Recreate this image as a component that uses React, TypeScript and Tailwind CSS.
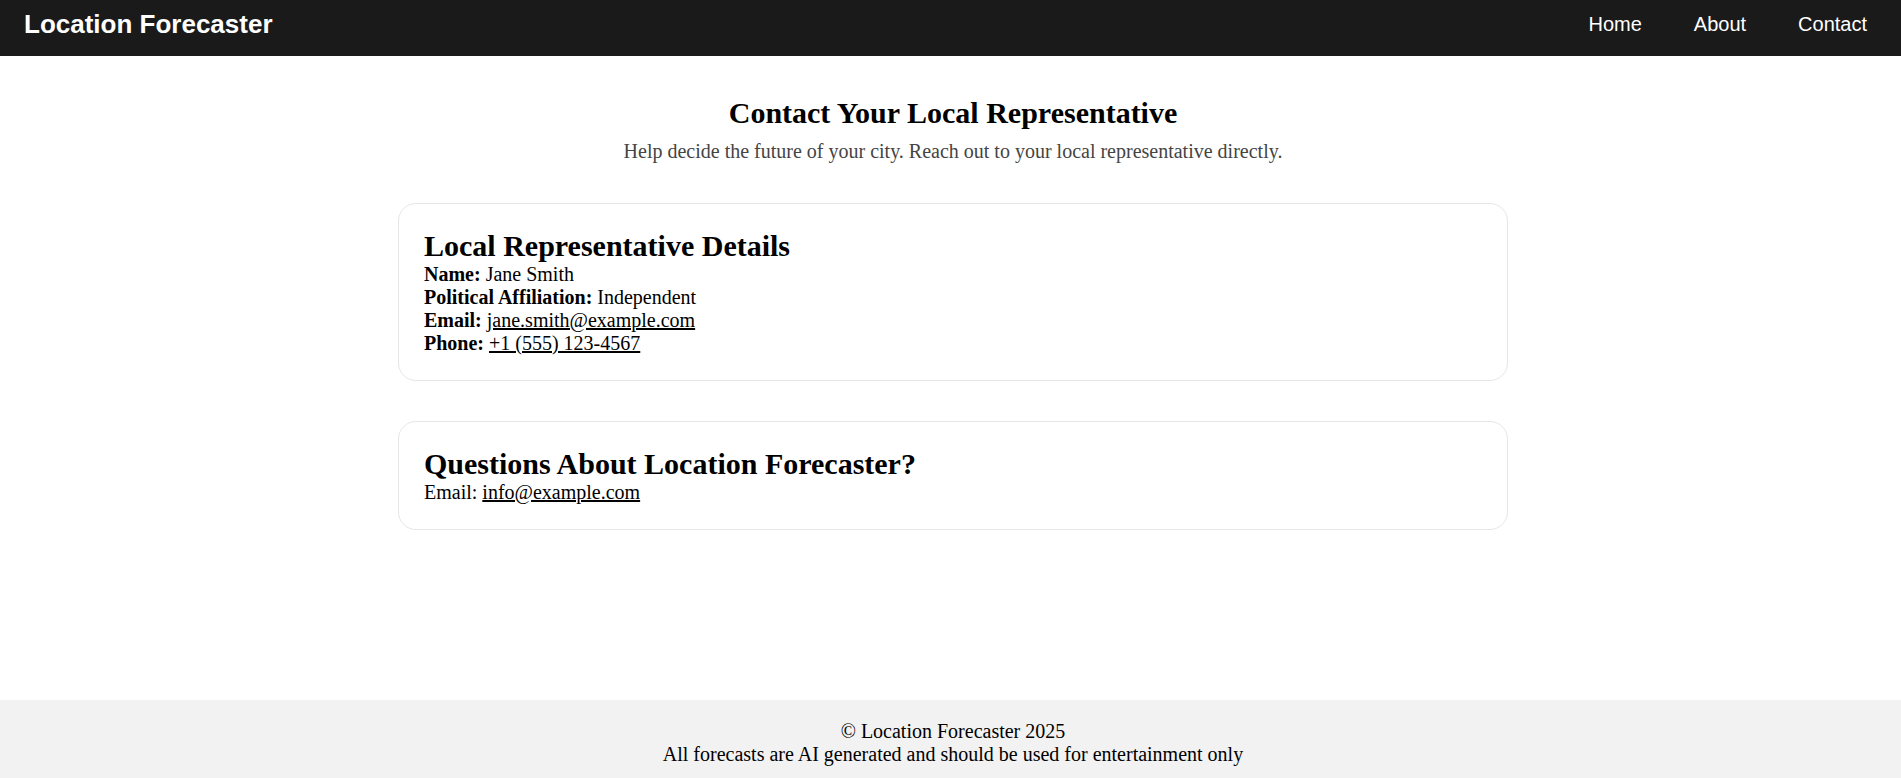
export default function App() {
  return (
    <div className="min-h-screen flex flex-col bg-white text-black font-['Liberation_Serif','Times_New_Roman',serif]">
      <header className="h-[56px] shrink-0 bg-[#1a1a1a] text-white flex items-start justify-between pl-[24px] pr-[34px] pt-[9px] font-['Liberation_Sans',Arial,sans-serif]">
        <h1 className="text-[26px] leading-[30px] font-bold">Location Forecaster</h1>
        <nav className="flex gap-[52px] pt-[4px] text-[20px] leading-[23px]">
          <a href="#">Home</a>
          <a href="#">About</a>
          <a href="#">Contact</a>
        </nav>
      </header>

      <main className="flex-1 flex flex-col items-center pl-[5px] pt-[40px]">
        <h2 className="text-[30px] leading-[34px] font-bold text-center">Contact Your Local Representative</h2>
        <p className="mt-[10px] text-[20px] leading-[23px] text-[#444] text-center">
          Help decide the future of your city. Reach out to your local representative directly.
        </p>

        <section className="mt-[40px] w-[1110px] border border-[#e6e6e6] rounded-[18px] px-[25px] pt-[25px] pb-[25px]">
          <h3 className="text-[30px] leading-[34px] font-bold">Local Representative Details</h3>
          <div className="text-[20px] leading-[23px]">
            <p><strong>Name:</strong> Jane Smith</p>
            <p><strong>Political Affiliation:</strong> Independent</p>
            <p>
              <strong>Email:</strong>{" "}
              <a href="#" className="underline">jane.smith@example.com</a>
            </p>
            <p>
              <strong>Phone:</strong>{" "}
              <a href="#" className="underline">+1 (555) 123-4567</a>
            </p>
          </div>
        </section>

        <section className="mt-[40px] w-[1110px] border border-[#e6e6e6] rounded-[18px] px-[25px] pt-[25px] pb-[25px]">
          <h3 className="text-[30px] leading-[34px] font-bold">Questions About Location Forecaster?</h3>
          <p className="text-[20px] leading-[23px]">
            Email: <a href="#" className="underline">info@example.com</a>
          </p>
        </section>
      </main>

      <footer className="shrink-0 bg-[#f2f2f2] pl-[5px] pt-[20px] pb-[12px] text-center text-[20px] leading-[23px]">
        <p>© Location Forecaster 2025</p>
        <p>All forecasts are AI generated and should be used for entertainment only</p>
      </footer>
    </div>
  );
}
